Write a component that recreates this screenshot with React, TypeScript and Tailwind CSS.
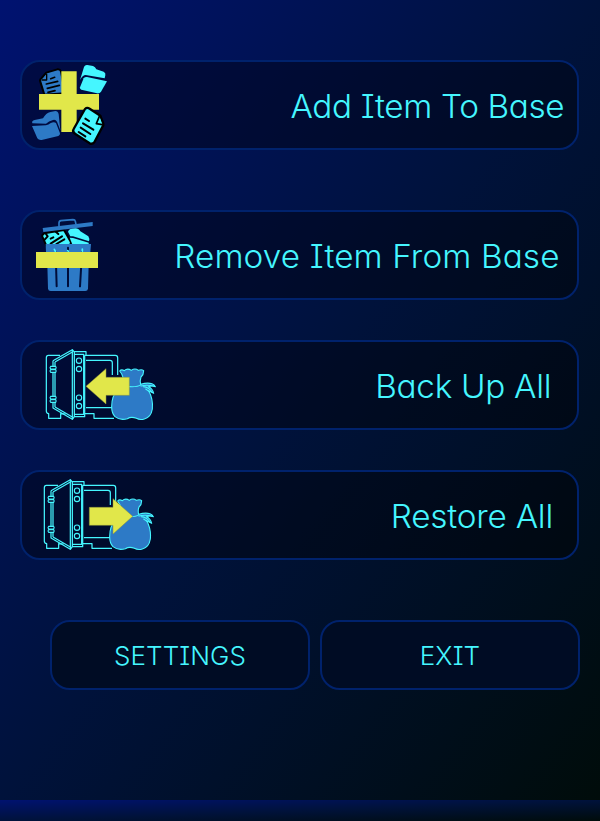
import type { ReactNode } from "react";

const CYAN = "#45f6ff";
const BLUE = "#2d7ac6";
const YELLOW = "#e1e74a";

function AddIcon() {
  return (
    <svg className="h-[86px] w-[100px] shrink-0" viewBox="21 21 300 258">
      <g stroke="#000" strokeWidth="6" strokeLinejoin="round" strokeLinecap="round">
        <path fill={BLUE} d="M75 77 Q75 72 80 69 L94 53 L127 43 Q135 42 138 49 L150 115 L88 119 Z" />
        <path fill={BLUE} strokeWidth="4" d="M81 75 L95 75 L95 58" />
        <path fill="none" d="M107 71 L119 67 M94 87 L128 79 M97 100 L133 91 M99 112 L120 107" strokeWidth="5" />
      </g>
      <g fill={CYAN}>
        <path d="M195 75 L207 36 Q210 29 217 30 L234 33 Q241 36 244 43 L266 50 Q273 54 271 61 L269 70 L212 60 Q203 60 195 75 Z" />
        <path d="M195 97 L206 70 Q210 65 216 66 L276 79 L258 110 Q254 116 246 115 L199 104 Q194 102 195 97 Z" />
      </g>
      <g fill={BLUE}>
        <path d="M52 205 Q49 197 59 195 L84 190 Q93 174 106 171 L121 168 Q129 168 131 177 L136 226 L126 200 Q122 193 114 195 Q101 198 93 206 Z" />
        <path d="M51 213 L93 211 Q101 210 106 205 Q117 199 123 204 L135 235 Q136 240 130 243 L80 255 Q71 256 67 250 Z" />
      </g>
      <path fill={YELLOW} d="M139 49H185V117H252V164H185V231H139V164H72V117H139Z" />
      <g stroke="#000" strokeLinejoin="round" strokeLinecap="round">
        <path fill={CYAN} strokeWidth="7" d="M210 162 Q216 156 224 161 L256 182 L265 206 Q266 211 262 216 L238 262 Q232 269 224 265 L180 236 Q171 230 176 222 Z" />
        <path fill={CYAN} strokeWidth="5" d="M253 184 L244 206 L261 209" />
        <path fill="none" strokeWidth="6" d="M211 191 L222 198 M204 205 L235 224 M197 218 L226 237 M191 231 L211 244" />
      </g>
    </svg>
  );
}

function RemoveIcon() {
  return (
    <svg className="h-[86px] w-[100px] shrink-0" viewBox="21 21 300 258">
      <g strokeLinejoin="round" strokeLinecap="round">
        <path fill={CYAN} stroke="#000" strokeWidth="6" d="M94 122 L82 95 Q80 89 88 85 L147 75 L168 112 L165 122 Z" />
        <path fill="none" stroke="#000" strokeWidth="6" d="M93 87 L98 94 L89 104 M107 101 L115 97 M120 78 L130 87 M107 116 L141 94 M124 117 L148 103" />
      </g>
      <path fill={CYAN} d="M159 80 Q163 70 181 70 Q191 70 196 79 L220 94 Q225 102 222 109 L174 94 L166 94 Z" />
      <path fill={CYAN} d="M164 98 L174 99 L221 113 V121 H173 Z" />
      <path fill={BLUE} d="M83 69 L233 51 V63 L85 81 Z" />
      <path fill="none" stroke={BLUE} strokeWidth="5" strokeLinejoin="round" d="M132 65 V54 Q132 48 138 47 L174 44 Q180 44 181 49 L183 58" />
      <path fill={BLUE} d="M92 117H228L226 142H222L219 251Q218 258 211 258H107Q100 258 99 251L96 142H93Z" />
      <g fill="none" strokeLinecap="round" strokeWidth="6">
        <path stroke="#000d39" d="M122 142 L125 244 M159 128 V244 M201 142 L195 244" />
        <path stroke={CYAN} strokeWidth="5" d="M118 133 L121 139 M158 137 L160 139 M202 132 V139" />
      </g>
      <path fill={YELLOW} d="M63 141H249V189H63Z" />
    </svg>
  );
}

function Safe({ arrow, shift }: { arrow: string; shift: number }) {
  return (
    <svg className="h-[86px] w-[140px] shrink-0" viewBox="-24 6 420 258">
      <g transform={`translate(${shift} 0)`}>
        <g fill="none" stroke={CYAN} strokeWidth="3.7" strokeLinejoin="round">
          <path d="M90 46 H55 Q49 46 49 53 V213 Q49 220 56 221 V235 H92 V221 L107 222" />
          <path d="M168 46 H256 Q263 46 263 53 V105 M168 61 H240 Q247 61 247 68 V105 M168 203 H247 M165 221 H192 V235 H252" />
          <path d="M75 66 L127 36 M75 201 L127 231 M75 66 V201" />
          <path d="M69 62 L127 29 L132 35 H168 V46 H164 M69 62 V204 L127 238 L133 230 H164 V46" />
          <path d="M127 29 V238 M133 34 V230 M133 43 H161 V223 H133" />
          <g strokeWidth="3.3">
            <circle cx="147" cy="62" r="8" />
            <circle cx="147" cy="87" r="8" />
            <circle cx="147" cy="173" r="8" />
            <circle cx="147" cy="198" r="8" />
          </g>
          <g fill="#000d30" strokeWidth="3.3">
            <path d="M62 79 H77 Q80 83 77 87 H62 Q58 83 62 79 Z M62 89 H77 Q80 93 77 97 H62 Q58 93 62 89 Z" />
            <path d="M62 169 H77 Q80 173 77 177 H62 Q58 173 62 169 Z M62 179 H77 Q80 183 77 187 H62 Q58 183 62 179 Z" />
          </g>
        </g>
        <g fill={BLUE} stroke={CYAN} strokeWidth="3.3" strokeLinejoin="round" strokeLinecap="round">
          <path d="M281 134 Q282 108 269 93 Q274 87 283 92 Q292 83 304 91 Q315 83 325 91 Q335 87 341 92 Q341 104 333 111 Q329 122 332 133 Q351 127 366 131 Q373 133 376 140 Q367 136 355 140 Q368 145 371 160 L356 152 Q370 177 367 207 Q363 232 343 237 Q330 241 319 235 Q304 229 292 236 Q270 242 255 230 Q245 219 245 200 Q245 166 263 151 Q271 143 281 134 Z" />
          <path fill="none" d="M297 140 Q322 142 333 134 M333 138 Q350 133 374 139 M340 140 Q356 142 366 156 M347 147 L357 154" />
        </g>
      </g>
      <path fill={YELLOW} stroke="#8d963c" strokeWidth="1.5" d={arrow} />
    </svg>
  );
}

function Card({
  icon,
  className,
  textClass,
  children,
}: {
  icon: ReactNode;
  className: string;
  textClass: string;
  children: ReactNode;
}) {
  return (
    <button
      className={`flex h-[90px] w-[559px] items-center justify-between rounded-[20px] border-2 border-[#00226c] bg-black/35 whitespace-nowrap text-[32px] ${className}`}
    >
      {icon}
      <span className={`origin-right scale-x-104 pt-1 ${textClass}`}>{children}</span>
    </button>
  );
}

function SmallButton({ children }: { children: ReactNode }) {
  return (
    <button className="flex h-[70px] w-[260px] items-center justify-center rounded-[20px] border-2 border-[#00226c] bg-[#000c24] text-[26px] tracking-[0.1px]">
      {children}
    </button>
  );
}

export default function App() {
  return (
    <div className="h-[821px] w-[600px] overflow-hidden font-['Inter',sans-serif] font-[340] text-[#45f6ff] [font-feature-settings:'cv08','cv11']">
      <main className="h-[800px] bg-[linear-gradient(to_bottom_right,#001270,#00123b_50%,#000c0a)] pt-[60px] pl-5">
        <Card icon={<AddIcon />} className="pr-[13px]" textClass="tracking-[-0.33px]">
          Add Item To Base
        </Card>
        <Card icon={<RemoveIcon />} className="mt-[60px] pr-[17px]" textClass="tracking-[0.13px]">
          Remove Item From Base
        </Card>
        <Card
          icon={<Safe shift={0} arrow="M168 139 L228 86 V112 H298 V166 H228 V192 Z" />}
          className="mt-10 pr-[26px]"
          textClass="tracking-[-0.27px]"
        >
          Back Up All
        </Card>
        <Card
          icon={<Safe shift={-6} arrow="M308 139 L249 86 V112 H178 V166 H249 V192 Z" />}
          className="mt-10 pr-[24px]"
          textClass="tracking-[-0.2px]"
        >
          Restore All
        </Card>
        <div className="mt-[60px] ml-[30px] flex gap-2.5">
          <SmallButton>SETTINGS</SmallButton>
          <SmallButton>EXIT</SmallButton>
        </div>
      </main>
      <div className="h-[21px] bg-[linear-gradient(to_bottom_right,#001270,#00123b_50%,#000c0a)]" />
    </div>
  );
}
